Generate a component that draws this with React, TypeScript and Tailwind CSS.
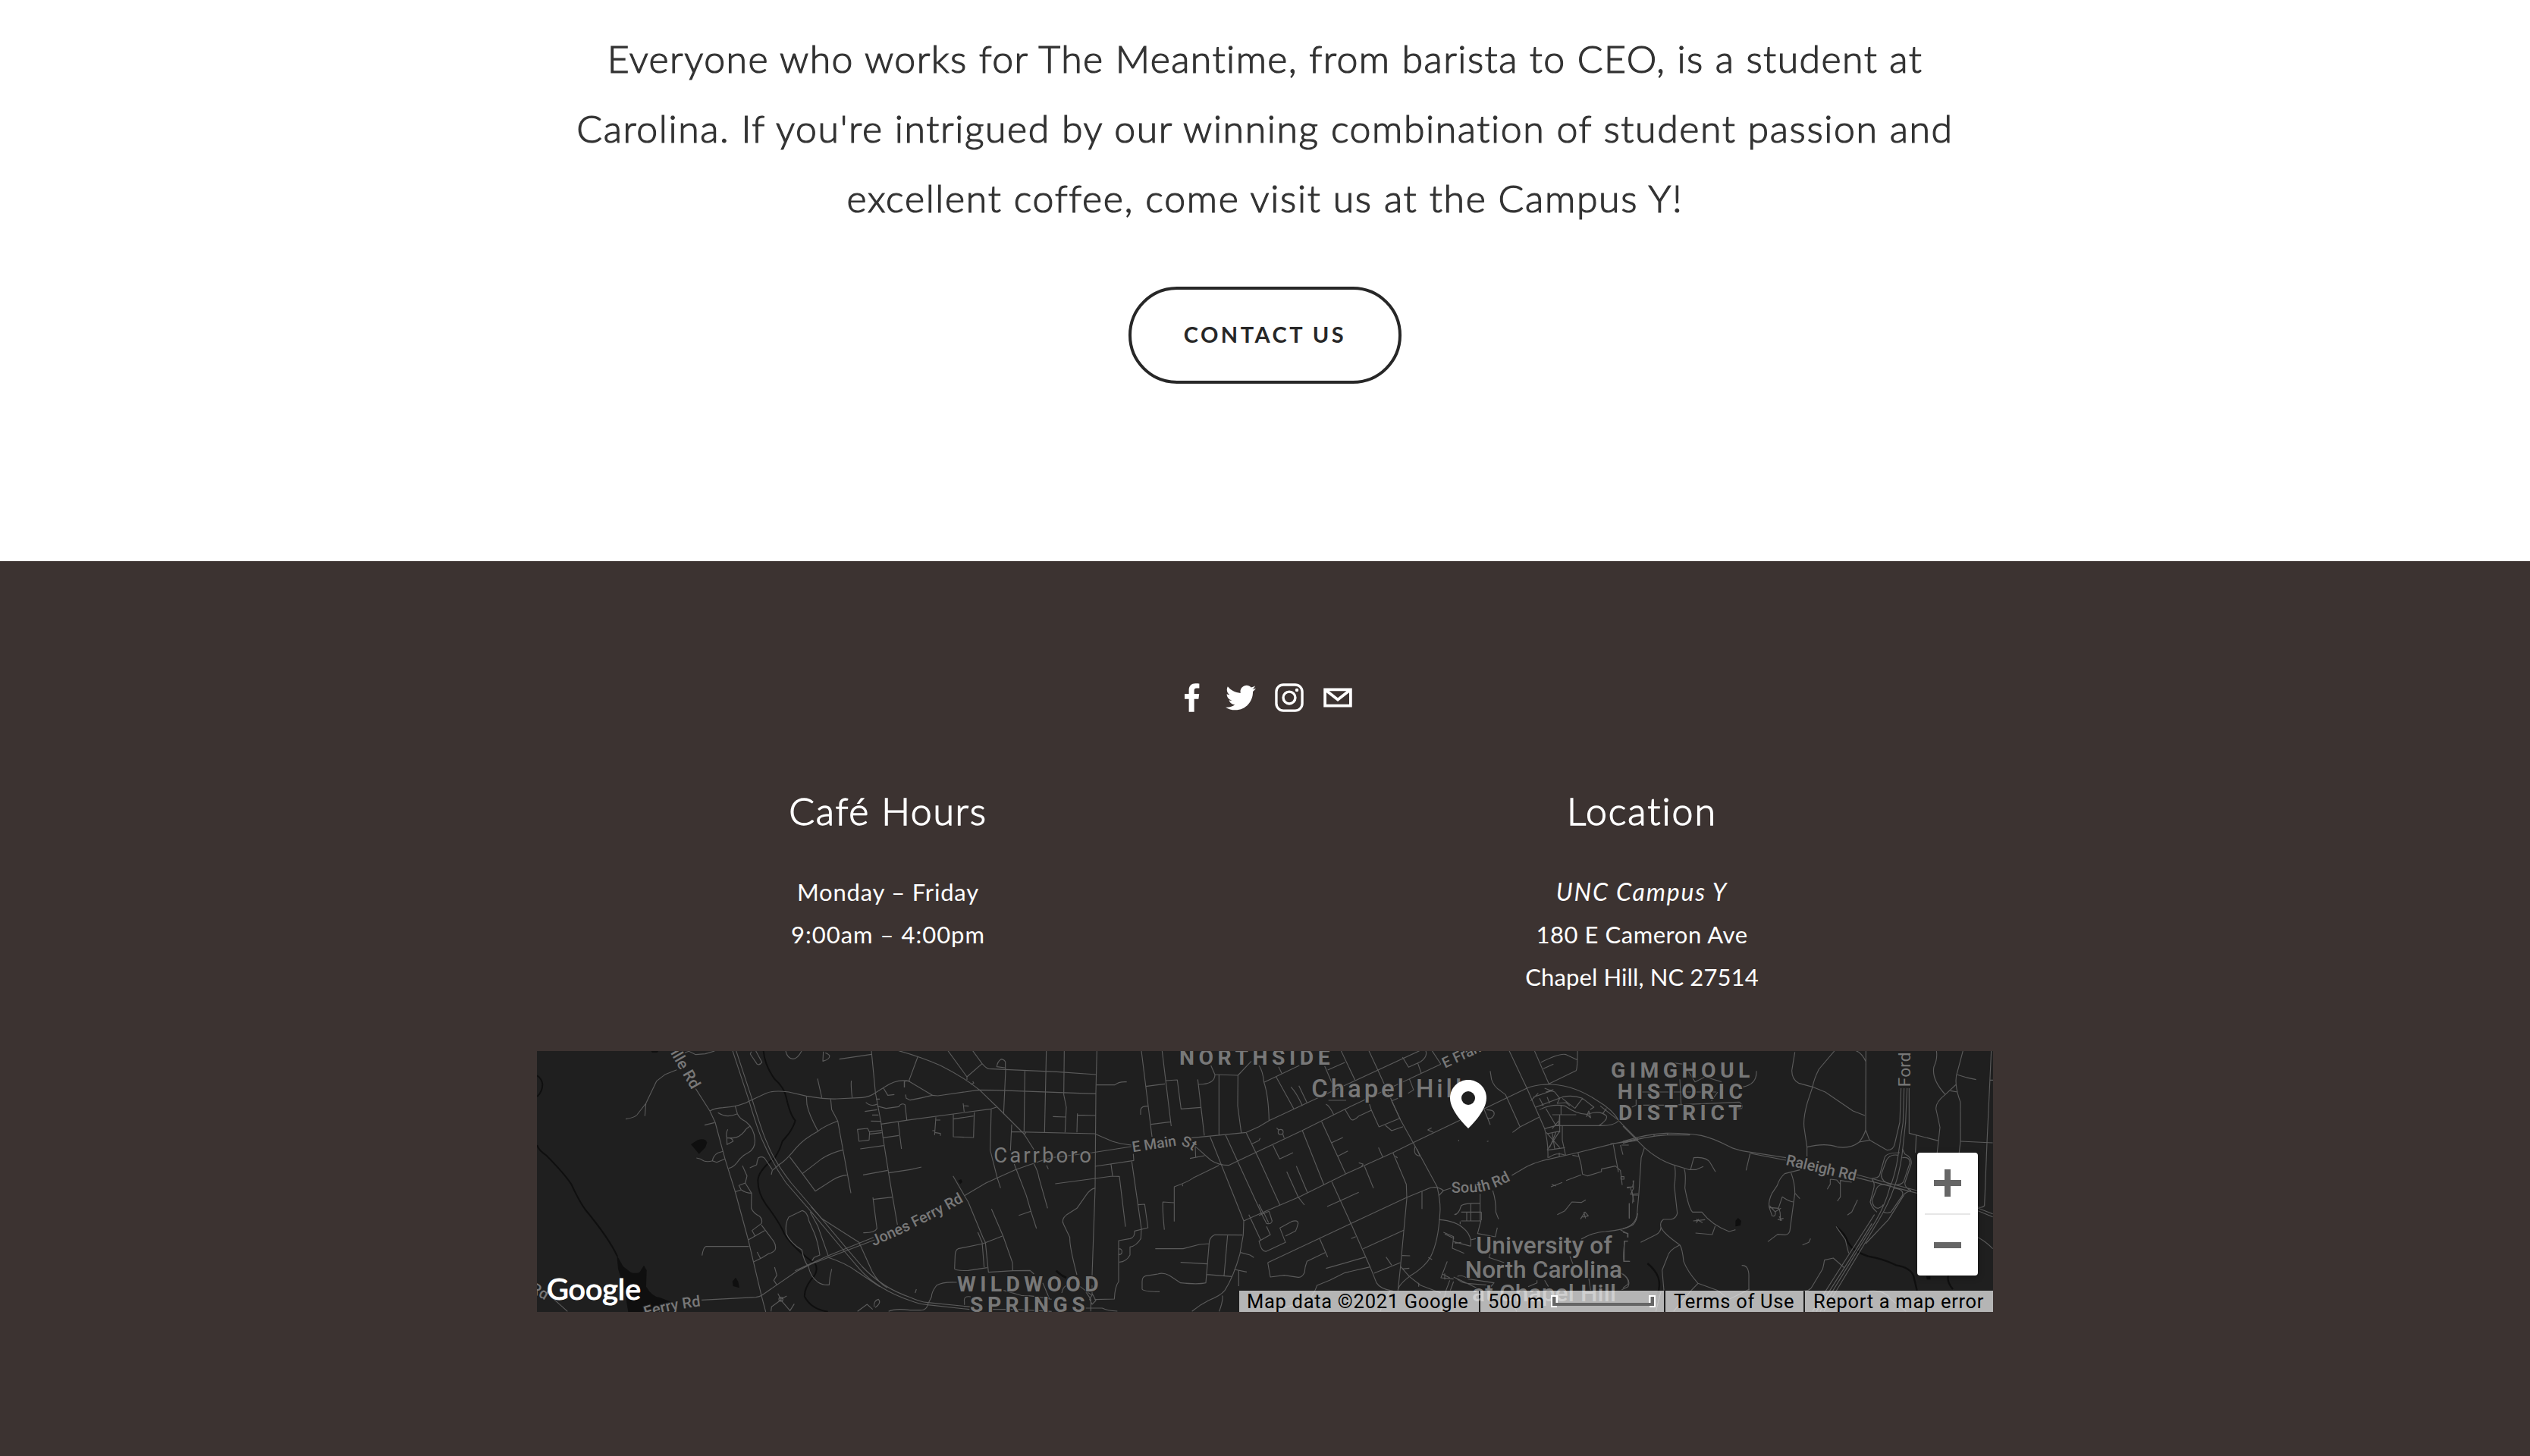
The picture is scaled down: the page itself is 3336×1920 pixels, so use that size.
import type { ReactNode } from "react";

/* ---------- Map geometry: four tiles, each traced in thirds of a pixel ---------- */

const ROADS_A = [
  "M577 92L532 110L497 137L455 225L420 270Q410 282 375 287M455 225L451 275",
  "M652 167L708 255L729 300L768 445L807 570L860 765L880 850L912 985L929 1050",
  "M708 255Q730 243 760 242Q830 237 870 213L930 185Q960 172 1020 180L1090 196Q1180 210 1210 207L1310 202Q1340 200 1363 183L1400 160Q1450 125 1500 138",
  "M798 17L860 205Q900 340 920 380Q960 470 1010 540L1110 655L1240 810L1300 880Q1370 960 1500 1005",
  "M812 17L874 205Q915 340 934 380Q960 450 1030 540L1120 645L1250 800L1310 870Q1390 955 1500 992",
  "M608 25L625 19L652 32L690 29L727 18M872 20L868 30L895 70Q905 76 914 62L890 18M1008 18Q1015 48 1037 49Q1055 49 1071 18M1157 20L1155 58Q1185 50 1181 35Q1175 28 1165 25M1220 50L1347 31",
  "M1347 17L1363 183L1385 300L1393 361L1415 500L1430 590L1450 705M1134 127L1151 203M1268 135Q1265 150 1271 203",
  "M1090 197L1092 230Q1100 270 1136 335M1186 208L1190 250L1214 295L1266 580M1214 295Q1160 315 1136 335Q1080 365 1050 400Q1010 450 985 465L955 490L951 507",
  "M1024 437L1074 503L1125 572L1195 527Q1225 510 1250 509M1074 503L1152 443Q1190 420 1233 410M687 311L727 301",
  "M740 262Q760 275 780 275Q800 273 817 266M808 235L817 266Q825 285 850 297Q885 325 886 370Q888 405 860 420Q830 435 815 460Q800 478 782 482",
  "M866 316Q850 325 843 338Q825 360 800 362L775 361Q770 345 779 328M775 361L776 388L800 375Q798 365 785 362",
  "M655 441Q670 442 685 453Q700 458 718 452Q722 430 740 421L760 415M718 452L735 458L768 445",
  "M866 480L893 468Q895 450 900 440Q920 430 930 450L955 487M837 472L855 512L848 540L823 550L832 567Q850 580 873 580L848 540M807 575L832 567M873 580L872 640Q880 660 905 672Q918 685 912 700L875 728L887 750M860 765L925 728M912 706L960 770Q972 790 966 805Q960 815 940 820Q915 838 881 852M895 813L908 838",
  "M677 827Q682 795 692 791L862 791M964 873L973 905L961 925L973 943",
  "M675 1003L890 992Q905 990 915 983L1050 890L1110 860L1360 765M1045 887L1175 828L1355 755",
  "M1112 848L1120 835L1143 825Q1135 770 1120 735L1100 690Q1095 655 1074 649L1020 675Q1005 700 1010 740Q1025 775 1072 805Q1080 850 1098 870Q1105 910 1135 932Q1155 945 1180 943Q1182 910 1190 880",
  "M1105 655L1135 710L1177 830M1108 633L1150 680L1298 775L1350 890Q1375 935 1410 955M1177 835Q1240 855 1290 890L1380 950",
  "M80 990L145 1048M977 977L989 1000L1012 987M950 1048L952 1030L989 1003L1025 1045L1042 1018M981 1000a8 8 0 1 0 16 0a8 8 0 1 0 -16 0",
  "M1292 1048L1330 1020L1352 1040M1358 1030Q1355 1005 1375 1000Q1388 1015 1362 1033M1415 1048Q1440 1035 1500 1043",
  "M1395 165L1412 193L1438 190M1478 140V162M1325 221Q1345 240 1370 228M1365 208H1380M1321 257L1370 250M1350 271H1375M1345 295L1383 296",
  "M1370 236L1405 245L1455 238Q1465 222 1480 230L1487 290M1385 307L1500 290M1453 300L1466 405M1393 361L1455 352",
  "M1292 328L1332 324L1340 340L1338 370L1298 375ZM1338 338L1388 332M1338 347L1388 341M1303 405L1396 392M1314 508L1412 490M1415 500L1500 487",
  "M1353 605L1430 596M1353 597L1369 720Q1360 738 1315 737",
];

const ROADS_B = [
  "M15 17Q100 40 180 75Q270 120 335 172L405 240L510 345L550 408M90 42L55 137L148 193Q100 205 60 212L45 205L42 190M37 162V138Q45 135 55 137",
  "M145 193L170 195L330 172L400 173L795 187M210 17L285 120L345 68L308 17M285 120V132M345 68Q360 85 370 88L640 100L797 111",
  "M308 138L312 145L300 150M437 92V60Q430 50 420 50Q405 60 403 80L435 84M438 92L430 268M514 97L511 335M599 17L592 340M670 17L668 190L678 240L673 340M799 17L795 180L792 560L780 905",
  "M797 152H870Q885 138 917 140M625 277L675 279M720 340L722 265M722 271L795 273M60 290L380 247L402 240M270 225L274 258M272 234L292 236",
  "M162 280L157 350M162 291H180M148 333H158M157 340L180 344V353M231 268V357L311 360L314 260M231 287L311 275",
  "M381 248L377 410L405 520L418 560M462 308L457 412M460 337L790 345L860 375Q890 385 935 390M510 350L518 340M60 487L105 477",
  "M230 512L275 590L290 615L348 755L358 775L370 893L468 887M275 590L360 540L475 488Q540 465 570 455L620 440L780 420L935 396",
  "M328 735L345 775L353 873M348 780L425 750M382 643L428 750L465 855L466 887M348 780L250 800Q238 805 238 830L236 880Q240 888 290 886L365 875M468 887L535 886L550 900",
  "M472 465L520 590L538 652L560 720M490 668L538 652M550 465Q565 490 570 520L604 640M600 470L607 485",
  "M634 543L860 513L888 514L912 713M792 474L945 451L943 425M855 466L861 512",
  "M937 455L975 720L973 760Q955 790 930 793L930 825Q915 852 888 853M962 626L988 624L1001 717L948 730Q950 755 930 760L885 768V930Q870 950 868 999L790 1001M885 800Q900 800 898 815Q895 825 885 823",
  "M792 560Q770 565 755 590L720 640L680 665Q655 685 668 705L692 755Q690 790 720 903M780 945V980M755 970L775 1000L775 1048M782 980L795 1005L780 1020L770 1000ZM755 1035H820Q840 1045 880 1047",
  "M245 933Q190 930 165 945Q145 970 145 990L130 1020Q125 1045 100 1043L60 1043M60 992Q100 1010 130 1013L300 1030M60 1005Q100 1020 130 1022L295 1040M300 990Q270 985 275 1010V1022M85 960L80 975",
  "M585 935L612 1000M430 965L500 985Q540 985 560 990L620 1000M660 975Q665 950 680 945M720 940L780 985M380 1040L480 1040L620 1048",
  "M975 17L1017 357M1057 17L1093 315M992 158L1068 148M1070 135L1117 132L1132 247L1210 241M1013 308L1090 298M1002 236Q975 235 972 250V270",
  "M1198 130L1224 352M1202 150Q1265 150 1266 112L1250 75M1266 111L1357 114L1410 58M1282 113V350M1357 114L1356 235L1370 340M1170 362L1390 340L1440 317",
  "M1188 395L1250 450Q1280 470 1320 470L1440 413M1188 395L1190 440M1167 443L1225 432M1282 470L1180 520Q1160 535 1105 555V692M1105 618L1060 615Q1058 650 1066 725M1138 545V553",
  "M1247 357L1380 690L1378 745L1365 820Q1340 910 1305 965Q1290 985 1240 1005L1210 1022L1175 1048M1308 350L1450 660M1390 342L1440 445M1380 690L1440 663M1410 386L1440 372L1445 362",
  "M1375 746L1265 745Q1243 755 1243 780L1230 935Q1200 942 1130 935L1085 905Q1060 893 1040 900L990 908Q978 912 978 930V960Q985 970 1047 970M1030 800L1140 800L1205 783L1243 780M1316 747L1302 908M1130 854L1235 860M1234 902L1333 910M1343 882L1392 892M1360 887V948M1367 815L1405 825L1420 835M1295 985Q1300 1000 1283 1048M1400 665L1448 768",
];

const ROADS_C = [
  "M0 317L40 293L230 205L635 17M0 413L170 333L340 248L720 70M0 663L160 595L345 503L530 420L610 380L795 292M890 247L1060 165Q1100 148 1160 150Q1250 155 1340 215Q1400 250 1425 295L1500 370",
  "M35 855L365 700L585 597L680 558Q710 553 730 570L760 560M1000 510L1060 475Q1100 455 1150 445L1260 420L1400 385L1500 365M1390 385L1500 372",
  "M435 17L470 92L560 290L610 380L705 555Q720 620 716 660Q710 770 680 830Q660 870 595 910Q550 945 550 965",
  "M325 17L380 133M272 93L340 63M260 77L290 147M78 80L90 106M20 142L160 75M0 75Q15 95 20 142Q38 195 40 293M68 120L138 247M127 160Q150 185 172 235M158 155L190 222",
  "M265 228Q280 235 296 270M275 213H345M340 248L362 285Q370 300 395 275L445 252L437 228M445 252L475 318L555 285M500 312L525 333L570 317",
  "M172 333L257 547M248 297L343 503M288 380L332 360M310 435L352 413M55 390L82 445L135 420M0 445L83 627M110 495L155 595L180 627M148 473L192 578M0 625L15 655",
  "M76 338a10 10 0 1 0 20 0a10 10 0 1 0 -20 0M70 322L78 330M95 348L100 362",
  "M288 535L365 703L440 872L465 935Q480 960 530 967M270 633L395 577M418 475L453 560M395 460L412 465L405 477M473 400L490 438M530 420L583 545L585 600L560 870L595 910L640 945Q680 960 720 975M560 870L550 965",
  "M412 800L573 727M265 878L422 833M365 760L383 752M455 897L560 855M503 833L525 865M566 827L598 828M566 880L595 877M670 835L685 843M632 935V950",
  "M240 760L272 833M262 815L190 850Q182 870 180 895Q170 915 155 913L100 905L45 912L35 855M440 872L340 895L280 925L230 945L222 965",
  "M0 768Q10 815 30 810L105 775L83 718L130 692Q155 685 155 700Q150 720 145 730L105 750M30 712L45 745L0 770M8 658L30 700Q50 705 52 690L40 652M18 655L38 697M0 668L40 652",
  "M618 395Q608 430 637 433L625 405M540 433L548 441M690 340L668 330L683 322M645 573V643M730 570L712 590",
  "M568 42L592 82L640 60Q668 40 660 17M628 65L642 105M720 70L685 17M595 128L612 172L590 185M560 290L525 215L550 205",
  "M915 97L920 130Q930 160 955 175L975 190L1033 318L1003 340M1033 318L1108 280M890 247L915 310M900 250Q935 250 930 270Q920 290 905 283M790 370V375M902 376L908 374",
  "M990 17L1060 165L1130 325Q1145 380 1143 440M1090 17L1147 148L1255 95Q1260 85 1260 17M1260 53L1215 32Q1190 25 1115 63M1125 88L1165 70",
  "M1085 200L1160 175M1075 215L1105 185M1095 240L1200 200Q1240 190 1280 205L1250 245M1110 250Q1160 225 1210 235Q1260 270 1300 268M1200 205L1250 245M1300 268Q1350 250 1375 275Q1380 290 1345 313M1280 205L1325 240L1310 250M1350 235L1420 290M1375 245L1360 265M1190 270H1255M1195 235V270M1160 270H1190L1185 313M1135 245L1175 313H1345Q1400 315 1422 295M1110 205L1125 235M1130 165L1170 180L1190 205L1180 225L1215 222L1230 235M1135 180L1165 170M1140 200L1150 225M1295 278L1305 255L1312 282L1297 268",
  "M1200 315V370L1213 430M1130 325L1185 310M1190 275V340M1137 340L1190 400M1190 335L1140 410M1160 340L1170 405M1175 340L1150 400M1140 345L1190 335M1143 410L1210 400M1145 440Q1180 415 1210 430M1188 420V435M1160 325L1185 295",
  "M1240 430L1265 435M1262 420L1275 470L1280 505L1300 512L1355 495V485L1410 473L1430 490L1437 548M1402 388L1422 497M1430 390L1440 428M1435 390H1463M1432 515H1444V525H1432Z",
  "M1155 555L1200 538M1158 545L1175 552M1215 530L1275 508M1180 665L1210 650L1238 615L1275 617L1293 607M1272 683L1290 655L1303 670L1280 675M1285 655L1292 680",
  "M1275 762Q1320 735 1370 732Q1450 725 1480 705Q1495 690 1498 660M1465 620V680M1483 530L1478 555L1457 560M1470 560L1480 590L1478 620M1480 588H1500",
  "M875 583V690M925 570Q938 610 937 655L948 683M773 665Q790 665 800 630Q810 620 875 620M838 620V690M822 657V690M800 655H880M800 690H878L865 740L935 753L943 717M880 655V688M796 692V703",
  "M713 685Q780 690 810 720Q830 735 838 765V790M730 735L770 752L765 798L812 818M735 742L772 760M770 772L838 790M775 778L800 775M838 765L858 760",
  "M915 820L910 835L970 855M745 850L720 915L770 920M735 898V922M785 910Q800 900 830 920L930 935L910 960M780 915Q795 935 830 938L920 945M770 912L820 935L860 955M755 925L740 965M770 930L757 965M725 900L755 915",
  "M1065 950L1100 935V925M1130 925L1145 950M1305 918L1312 965M1430 895Q1475 920 1460 950L1435 962M1430 725L1458 740V755M1460 770H1447Q1440 820 1443 850H1465M1230 830L1242 860M520 965Q490 1010 480 1048M222 965L200 1000L60 1048M980 985L1020 1048M740 965L720 1048",
];

const ROADS_D = [
  "M0 315L85 400Q140 450 205 470L260 487L290 487L318 475M268 485L280 440Q330 435 345 460L366 496",
  "M0 375Q100 345 170 343Q250 342 310 352Q350 360 420 395Q450 412 505 418L645 440M0 383Q90 355 175 350H265M123 347V357M176 341V350M505 423L645 450M503 423L487 490",
  "M680 22L668 95Q668 130 695 145L750 160L800 180L910 255L957 273M837 17L775 90Q755 130 750 160L730 220Q710 290 718 330L728 398V435",
  "M728 398Q800 380 850 398Q900 405 935 378Q955 350 960 330L961 17M961 60Q945 25 922 17M960 330L975 370L1045 410Q1070 410 1075 385L1095 300L1100 165M935 378L978 370",
  "M1112 165L1108 300L1090 420Q1080 500 1055 560Q1040 620 1000 690L780 1048M1124 165L1118 300L1105 420Q1095 500 1072 560Q1050 625 1010 690L795 1048M1132 165V343L1248 373M1160 352L1157 420",
  "M1240 17Q1245 50 1230 80Q1220 130 1275 190L1318 150Q1315 120 1323 100L1345 17M1275 190Q1230 225 1240 255Q1250 300 1254 320L1243 420M1318 150Q1320 180 1335 220V375L1330 420M1295 175L1323 180M1323 112Q1360 125 1397 131",
  "M1335 375L1463 381M1457 17L1440 380L1430 630Q1420 640 1405 635M1452 133H1464M1405 640L1463 662M1405 650L1463 674M1405 755Q1440 775 1463 800",
  "M925 507L1163 570M922 518L1163 580M1095 420Q1040 420 1035 440L1015 510Q1010 520 985 522M1088 430Q1055 425 1042 450L1022 505Q1020 535 1060 545M1105 405L1115 425Q1145 440 1140 465L1115 540Q1115 560 1140 570M1105 440Q1135 435 1135 460L1110 535Q1100 548 1075 548",
  "M985 525Q1000 540 990 570L978 615Q985 640 1005 655M1055 550Q1010 535 1000 570L985 610Q990 640 1010 640Q1025 635 1030 625M1070 560Q1115 565 1105 590L1060 655Q1045 662 1030 655M1140 570Q1110 580 1110 590L1050 685L960 780",
  "M995 665L950 735L750 1048M985 700L905 830L765 1048M875 875L832 837L797 845Q795 860 790 880L745 955Q730 970 715 965M893 818Q885 790 880 765L843 712",
  "M928 607L905 655L888 667M820 525V545L808 565M820 525L845 528L860 545V595L848 612M860 545V530L905 537",
  "M700 488L640 503Q620 520 610 550L590 580Q575 610 578 635L590 670Q605 675 603 655L580 630M580 637L615 640L630 595Q660 615 675 615M665 500Q680 540 680 580L660 730Q655 745 640 745L612 743L573 772M680 580L700 602M615 640Q625 650 622 690M612 685L635 680M600 655L625 640M628 690L618 672",
  "M710 785L735 775L742 760M85 400L72 440L63 580L55 670Q45 710 0 720",
  "M205 472Q210 510 203 550L215 660Q210 680 190 684H160Q145 695 150 715Q160 740 225 785Q235 800 240 850Q255 890 297 937L375 965M150 715Q150 735 130 745L70 775M225 785Q180 805 175 835L155 885L162 965M297 937L270 965",
  "M242 485Q250 500 245 560Q260 640 275 655H312Q350 705 420 732L445 725M365 710L353 744L287 738M278 690L325 685M290 683L315 697M300 683L290 697",
  "M470 866Q500 865 498 915V965M475 160Q530 150 528 97M225 130L230 230M80 232H180L460 220Q475 230 470 245L450 247M75 180H370M260 100L285 140L325 120L390 140M350 215L375 180M200 65L240 70M35 240L52 232V210",
  "M40 530L42 560L30 585L60 582M15 557L40 555M25 620V680M35 570L43 615M0 735L20 740V755M18 770H5V850H28M0 900Q25 920 20 940L0 955M375 965L420 1000L500 960M270 965L200 1048M960 970Q1030 955 1060 1000L1120 1048M150 970L130 1048",
];

const STREAMS_A =
  "M25 115Q45 130 46 150Q45 180 25 198M25 390Q30 410 60 430Q130 500 160 545Q190 610 215 645Q310 760 342 830M920 17Q925 75 965 130Q1000 160 1010 200Q1025 270 1046 293Q1040 315 1020 345L995 375Q985 410 965 440Q900 490 898 530Q898 580 930 625Q980 690 1005 745Q1040 800 1125 860Q1140 890 1110 920Q1080 960 1083 990Q1110 1040 1175 1049";
const PONDS_A =
  "M340 825L365 870L395 893Q415 900 430 893L447 866L458 885L456 950Q480 990 510 993L558 1012L470 1040L440 1050H385L370 960L345 880ZM633 387L660 370Q690 360 697 380L690 400L665 425ZM797 930L810 914L820 930L825 955L800 948ZM475 17H505L500 24H480Z";
const STREAMS_D =
  "M97 858Q130 885 140 915Q150 950 135 985M843 712Q880 740 890 775Q910 810 970 830Q1030 840 1080 865Q1140 875 1150 910L1163 965M1287 905Q1280 930 1305 960";

function Tile({ x, roads, children }: { x: number; roads: string[]; children?: ReactNode }) {
  return (
    <g transform={`translate(${x} -6) scale(0.33333)`} fill="none" strokeLinejoin="round">
      {children}
      {roads.map((d) => (
        <path key={d} d={d} stroke="#5b5b5b" strokeWidth="3.4" />
      ))}
    </g>
  );
}

type LabelProps = {
  x: number;
  y: number;
  size: number;
  width?: number;
  weight?: number;
  rotate?: number;
  anchor?: "start" | "end";
  children: string;
};

function Label({ x, y, size, width, weight = 400, rotate = 0, anchor = "start", children }: LabelProps) {
  return (
    <text
      transform={`translate(${x} ${y}) rotate(${rotate})`}
      fontSize={size}
      fontWeight={weight}
      textAnchor={anchor}
      textLength={width}
    >
      {children}
    </text>
  );
}

function CurvedLabel({ id, d, size, children }: { id: string; d: string; size: number; children: string }) {
  return (
    <>
      <path id={id} d={d} fill="none" stroke="none" />
      <text fontSize={size} fontWeight="500">
        <textPath href={`#${id}`}>{children}</textPath>
      </text>
    </>
  );
}

function Labels({ x, children }: { x: number; children: ReactNode }) {
  return (
    <g
      transform={`translate(${x} -6) scale(0.33333)`}
      className="font-['Roboto']"
      fill="#787878"
      stroke="#1f1f1f"
      strokeWidth="7"
      paintOrder="stroke"
    >
      {children}
    </g>
  );
}

function MapDrawing() {
  return (
    <svg viewBox="0 0 1920 344" className="block h-[344px] w-[1920px]">
      <rect width="1920" height="344" fill="#1f1f1f" />
      <Tile x={-8} roads={ROADS_A}>
        <path d={STREAMS_A} stroke="#0f0f0f" strokeWidth="6" />
        <path d={PONDS_A} fill="#0f0f0f" />
      </Tile>
      <Tile x={472} roads={ROADS_B}>
        <path d="M638 887Q655 905 678 915" stroke="#0f0f0f" strokeWidth="8" />
        <path d="M250 530L262 525L267 536L258 544Z" fill="#0f0f0f" />
      </Tile>
      <Tile x={952} roads={ROADS_C} />
      <Tile x={1432} roads={ROADS_D}>
        <path d={STREAMS_D} stroke="#0f0f0f" strokeWidth="7" />
        <path d="M445 690L455 678L468 690L465 708L445 712ZM1200 908H1216V922H1202Z" fill="#0f0f0f" />
      </Tile>

      <Labels x={-8}>
        <Label x={636} y={172} size={62} weight={500} rotate={60} anchor="end">ville Rd</Label>
        <CurvedLabel id="jones" d="M1356 790Q1470 740 1560 695T1770 580" size={59.5}>Jones Ferry Rd</CurvedLabel>
        <CurvedLabel id="ferry" d="M454 1072Q560 1038 700 1024" size={60}>Ferry Rd</CurvedLabel>
        <Label x={56} y={1004} size={60} weight={500} rotate={30} anchor="end">Rd</Label>
      </Labels>
      <Labels x={472}>
        <Label x={391} y={458} size={83} width={386}>Carrboro</Label>
        <Label x={246} y={968} size={85} width={560} weight={700}>WILDWOOD</Label>
        <Label x={297} y={1050} size={85} width={455} weight={700}>SPRINGS</Label>
        <Label x={1125} y={72} size={85} width={596} weight={700}>NORTHSIDE</Label>
        <CurvedLabel id="main" d="M941 418L1120 391Q1150 388 1200 430" size={58}>E Main St</CurvedLabel>
      </Labels>
      <Labels x={952}>
        <Label x={208} y={200} size={99} width={594} weight={500}>Chapel Hill</Label>
        <Label x={736} y={86} size={58} weight={500} rotate={-25}>E Franklin St</Label>
        <CurvedLabel id="south" d="M762 579L860 576Q930 570 1020 515" size={60}>South Rd</CurvedLabel>
        <Label x={859} y={818} size={95} width={538} weight={500}>University of</Label>
        <Label x={815} y={914} size={95} width={622} weight={500}>North Carolina</Label>
        <Label x={843} y={1008} size={95} width={570} weight={500}>at Chapel Hill</Label>
      </Labels>
      <Labels x={1432}>
        <Label x={-48} y={122} size={85} width={550} weight={700}>GIMGHOUL</Label>
        <Label x={-22} y={206} size={85} width={496} weight={700}>HISTORIC</Label>
        <Label x={-18} y={290} size={85} width={488} weight={700}>DISTRICT</Label>
        <Label x={642} y={468} size={60} width={284} weight={500} rotate={13}>Raleigh Rd</Label>
        <Label x={1137} y={160} size={68} width={138} rotate={-90}>Ford</Label>
      </Labels>
    </svg>
  );
}

function Pin() {
  return (
    <svg viewBox="0 0 48 64" className="absolute top-[38px] left-[1204px] h-16 w-12">
      <path fill="#fff" d="M24 0C10.700 0 0 10.700 0 24C0 42 24 64 24 64S48 42 48 24C48 10.700 37.300 0 24 0Z" />
      <circle cx="24" cy="24" r="9" fill="#1f1f1f" />
    </svg>
  );
}

function ZoomControl() {
  return (
    <div className="absolute top-[134px] left-[1820px] flex h-[162px] w-20 flex-col items-center rounded-[4px] bg-white shadow-[0_2px_8px_rgba(0,0,0,0.3)]">
      <svg viewBox="0 0 36 36" className="mt-[22px] size-9">
        <path d="M14 0h8v14h14v8H22v14h-8V22H0v-8h14z" fill="#666" />
      </svg>
      <div className="mt-[22px] h-0.5 w-[60px] bg-[#e6e6e6]" />
      <div className="mt-9 h-2 w-9 bg-[#666]" />
    </div>
  );
}

function Attribution() {
  const cell = "flex h-7 items-center bg-[#f5f5f5]/70";
  return (
    <div className="absolute right-0 bottom-0 flex gap-0.5 font-['Roboto'] text-[25.5px] leading-7 whitespace-nowrap text-black">
      <div className={`${cell} w-[316px] pl-2.5 tracking-[0.7px]`}>Map data ©2021 Google</div>
      <div className={`${cell} w-[242px] pl-2.5 tracking-[0.6px]`}>
        500 m
        <svg viewBox="0 0 138 16" className="ml-2 h-4 w-[138px]">
          <path d="M4 2V12H134V2" fill="none" stroke="#666" strokeWidth="4" />
          <path d="M8 10V1H1V15H8M130 10V1H137V15H130" fill="none" stroke="#fff" strokeWidth="2" />
        </svg>
      </div>
      <div className={`${cell} w-[182px] pl-[11px] tracking-[0.7px]`}>Terms of Use</div>
      <div className={`${cell} w-[248px] pl-[11px] tracking-[0.68px]`}>Report a map error</div>
    </div>
  );
}

function SocialIcon({ children }: { children: ReactNode }) {
  return (
    <svg viewBox="16 16 32 32" className="size-10 fill-white">
      {children}
    </svg>
  );
}

export default function App() {
  return (
    <div className="h-[1920px] w-[3336px] overflow-hidden bg-white font-['Lato',sans-serif]">
      <section className="flex h-[740px] flex-col items-center pt-[31px]">
        <p className="text-center text-[50px] leading-[92px] font-light whitespace-nowrap text-[#333] [-webkit-text-stroke:1.2px_#333]">
          <span className="block tracking-[1.45px]">Everyone who works for The Meantime, from barista to CEO, is a student at</span>
          <span className="block tracking-[1.59px]">Carolina. If you're intrigued by our winning combination of student passion and</span>
          <span className="block tracking-[1.67px]">excellent coffee, come visit us at the Campus Y!</span>
        </p>
        <a className="mt-[71px] flex h-32 w-[360px] items-center justify-center rounded-full border-4 border-[#272727] pb-0.5 text-[29px] font-bold tracking-[3.5px] text-[#272727]">
          CONTACT US
        </a>
      </section>

      <footer className="flex h-[1180px] flex-col items-center bg-[#3c3331] pt-40 text-white">
        <div className="flex gap-6">
          <SocialIcon>
            <path d="M34.1,47V33.3h4.6l0.7-5.3h-5.3v-3.4c0-1.5,0.4-2.6,2.6-2.6l2.8,0v-4.8c-0.5-0.1-2.2-0.2-4.1-0.2 c-4.1,0-6.9,2.5-6.9,7V28H24v5.3h4.5V47H34.1z" />
          </SocialIcon>
          <SocialIcon>
            <path d="M48,22.1c-1.2,0.5-2.4,0.9-3.8,1c1.4-0.8,2.4-2.1,2.9-3.6c-1.3,0.8-2.7,1.3-4.2,1.6 C41.7,19.8,40,19,38.2,19c-3.6,0-6.6,2.9-6.6,6.6c0,0.5,0.1,1,0.2,1.5c-5.5-0.3-10.3-2.9-13.5-6.9c-0.6,1-0.9,2.1-0.9,3.3 c0,2.3,1.2,4.3,2.9,5.5c-1.1,0-2.1-0.3-3-0.8c0,0,0,0.1,0,0.1c0,3.2,2.3,5.8,5.3,6.4c-0.6,0.1-1.1,0.2-1.7,0.2c-0.4,0-0.8,0-1.2-0.1 c0.8,2.6,3.3,4.5,6.1,4.6c-2.2,1.8-5.1,2.8-8.2,2.8c-0.5,0-1.1,0-1.6-0.1c2.9,1.9,6.4,2.9,10.1,2.9c12.1,0,18.7-10,18.7-18.7 c0-0.3,0-0.6,0-0.8C46,24.5,47.1,23.4,48,22.1z" />
          </SocialIcon>
          <SocialIcon>
            <rect x="18.35" y="18.35" width="27.3" height="27.3" rx="7.4" fill="none" stroke="#fff" strokeWidth="2.7" />
            <circle cx="32" cy="32" r="6.350" fill="none" stroke="#fff" strokeWidth="2.7" />
            <circle cx="40" cy="24" r="1.800" />
          </SocialIcon>
          <SocialIcon>
            <path d="M17,22v20h30V22H17z M41.1,25L32,32.1L22.9,25H41.1z M20,39V26.6l12,9.3l12-9.3V39H20z" />
          </SocialIcon>
        </div>

        <div className="mt-[99px] flex w-[1988px] text-center">
          <div className="flex-1">
            <h3 className="text-[50px] leading-[60px] font-light tracking-[1.7px] [-webkit-text-stroke:1.3px_white]">Café Hours</h3>
            <p className="mt-[49px] text-[31px] leading-[56px]">
              <span className="block tracking-[0.8px]">Monday – Friday</span>
              <span className="block tracking-[1px]">9:00am – 4:00pm</span>
            </p>
          </div>
          <div className="flex-1">
            <h3 className="text-[50px] leading-[60px] font-light tracking-[2px] [-webkit-text-stroke:1.3px_white]">Location</h3>
            <p className="mt-[49px] text-[31px] leading-[56px]">
              <em className="block text-[32px] tracking-[1.8px]">UNC Campus Y</em>
              <span className="block tracking-[0.55px]">180 E Cameron Ave</span>
              <span className="block tracking-[0.12px]">Chapel Hill, NC 27514</span>
            </p>
          </div>
        </div>

        <div className="relative mt-[70px] h-[344px] w-[1920px] overflow-hidden">
          <MapDrawing />
          <Pin />
          <svg viewBox="0 0 132 48" className="absolute bottom-0 left-3 h-12 w-[132px]">
            <text
              x="1"
              y="32"
              fill="#fff"
              stroke="#fff"
              strokeWidth="1.1"
              fontSize="39.5"
              textLength="124"
              lengthAdjust="spacingAndGlyphs"
            >
              Google
            </text>
          </svg>
          <ZoomControl />
          <Attribution />
        </div>
      </footer>
    </div>
  );
}
